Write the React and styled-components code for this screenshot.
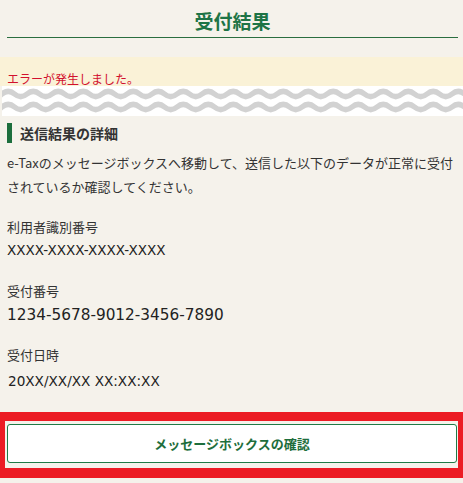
import React from "react";
import styled, { createGlobalStyle } from "styled-components";

const Global = createGlobalStyle`
  html, body { margin: 0; padding: 0; }
  body {
    background: #f5f2eb;
    font-family: "Noto Sans CJK JP", "Noto Sans", sans-serif;
    color: #333;
  }
  * { box-sizing: border-box; }
`;

const Page = styled.div`
  width: 463px;
  background: #f5f2eb;
  padding-bottom: 5px;
`;

const Header = styled.header`
  margin: 0 5px 0 7px;
  padding-top: 4px;
  border-bottom: 1px solid #2a6e3f;
`;

const Title = styled.h1`
  margin: 0;
  font-size: 19px;
  line-height: 33px;
  font-weight: 700;
  color: #1d7446;
  text-align: center;
`;

const ErrorBox = styled.div`
  margin-top: 19px;
  background: #faf2d7;
  padding: 15px 7px 0;
  height: 29px;
`;

const ErrorText = styled.p`
  margin: 0;
  font-size: 12px;
  line-height: 14px;
  color: #d2102e;
`;

const WaveBand = styled.div`
  margin-left: 2px;
  height: 30px;
  background: #ffffff;
  svg { display: block; }
`;

const Content = styled.section`
  padding: 0 5px 0 7px;
`;

const Heading = styled.h2`
  margin: 7px 0 0;
  display: flex;
  align-items: center;
  gap: 8px;
  font-size: 14px;
  line-height: 20px;
  font-weight: 700;
  color: #333;
  &::before {
    content: "";
    width: 5px;
    height: 20px;
    background: #1c6e3d;
  }
`;

const Paragraph = styled.p`
  margin: 8px 0 0;
  font-size: 13px;
  line-height: 24px;
  color: #333;
  white-space: nowrap;
`;

const Label = styled.div`
  margin-top: ${(p) => p.$mt}px;
  font-size: 13px;
  line-height: 20px;
  color: #333;
`;

const Value = styled.div`
  margin-top: ${(p) => p.$mt}px;
  font-family: "DejaVu Sans", "Noto Sans", sans-serif;
  font-size: ${(p) => p.$size}px;
  line-height: ${(p) => p.$lh}px;
  color: #222;
  padding-left: ${(p) => p.$pl || 0}px;
`;

const Frame = styled.div`
  margin-top: 20px;
  width: 463px;
  display: flex;
  border-style: solid;
  border-color: #ec1c24;
  border-width: 9px 5px 10px 5px;
  padding: 3px 1px 5px 2px;
  background: #f5f2eb;
`;

const Button = styled.button`
  flex: 1;
  height: 39px;
  background: #ffffff;
  border: 1px solid #1f7a46;
  border-radius: 3px;
  font-family: "Noto Sans CJK JP", sans-serif;
  font-size: 13px;
  font-weight: 700;
  color: #1e6e3c;
  cursor: pointer;
  padding: 0;
`;

function Waves() {
  const a = 2.6;
  const row = (c) => {
    let d = `M-25 ${c}`;
    for (let x = -25; x < 475; x += 25) {
      d += ` Q${x + 6.25} ${c - 2 * a} ${x + 12.5} ${c} Q${x + 18.75} ${c + 2 * a} ${x + 25} ${c}`;
    }
    return d;
  };
  return (
    <svg width="461" height="30" viewBox="0 0 461 30">
      <path d={row(8)} fill="none" stroke="#d2d2d2" strokeWidth="5.5" />
      <path d={row(21)} fill="none" stroke="#d2d2d2" strokeWidth="5.5" />
    </svg>
  );
}

export default function App() {
  return (
    <Page>
      <Global />
      <Header>
        <Title>受付結果</Title>
      </Header>
      <ErrorBox>
        <ErrorText>エラーが発生しました。</ErrorText>
      </ErrorBox>
      <WaveBand>
        <Waves />
      </WaveBand>
      <Content>
        <Heading>送信結果の詳細</Heading>
        <Paragraph>
          e-Taxのメッセージボックスへ移動して、送信した以下のデータが正常に受付
          <br />
          されているか確認してください。
        </Paragraph>
        <Label $mt={18}>利用者識別番号</Label>
        <Value $mt={2} $size={13.5} $lh={22}>XXXX-XXXX-XXXX-XXXX</Value>
        <Label $mt={20}>受付番号</Label>
        <Value $mt={2} $size={15.3} $lh={24}>1234-5678-9012-3456-7890</Value>
        <Label $mt={18}>受付日時</Label>
        <Value $mt={5} $size={13.6} $lh={22} $pl={1}>20XX/XX/XX XX:XX:XX</Value>
      </Content>
      <Frame>
        <Button>メッセージボックスの確認</Button>
      </Frame>
    </Page>
  );
}
